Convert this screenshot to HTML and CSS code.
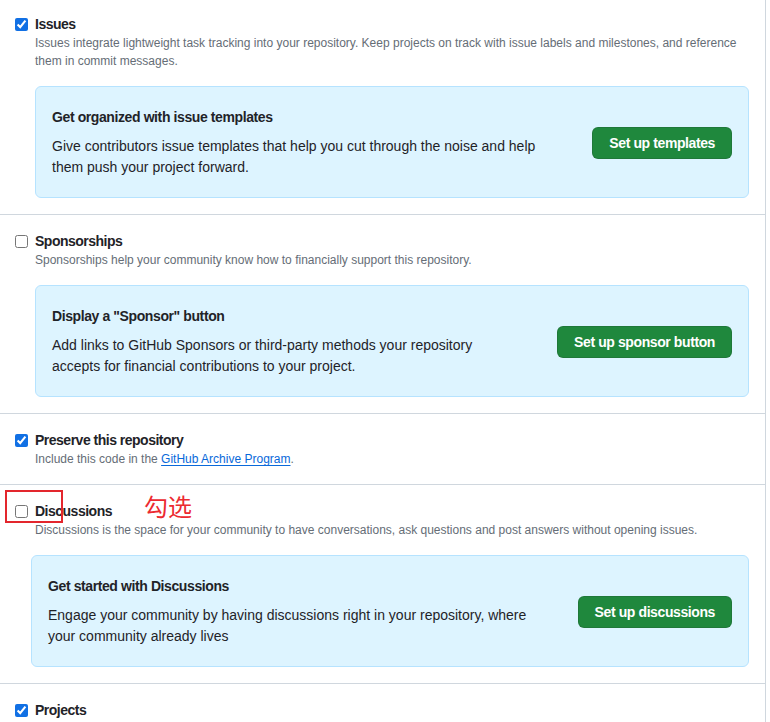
FILE: index.html
```html
<!DOCTYPE html>
<html lang="en">
<head>
<meta charset="utf-8">
<title>Features</title>
<link rel="stylesheet" href="styles.css">
</head>
<body>
<div class="features">
  <section class="feature">
    <input type="checkbox" class="check" checked>
    <div class="feature-body">
      <div class="label">Issues</div>
      <p class="note">Issues integrate lightweight task tracking into your repository. Keep projects on track with issue labels and milestones, and reference them in commit messages.</p>
      <div class="callout">
        <div class="callout-text">
          <h3 class="callout-title">Get organized with issue templates</h3>
          <p class="callout-desc">Give contributors issue templates that help you cut through the noise and help them push your project forward.</p>
        </div>
        <button class="btn-primary">Set up templates</button>
      </div>
    </div>
  </section>

  <section class="feature">
    <input type="checkbox" class="check">
    <div class="feature-body">
      <div class="label">Sponsorships</div>
      <p class="note">Sponsorships help your community know how to financially support this repository.</p>
      <div class="callout">
        <div class="callout-text">
          <h3 class="callout-title">Display a "Sponsor" button</h3>
          <p class="callout-desc">Add links to GitHub Sponsors or third-party methods your repository accepts for financial contributions to your project.</p>
        </div>
        <button class="btn-primary">Set up sponsor button</button>
      </div>
    </div>
  </section>

  <section class="feature">
    <input type="checkbox" class="check" checked>
    <div class="feature-body">
      <div class="label">Preserve this repository</div>
      <p class="note">Include this code in the <a href="#" class="link">GitHub Archive Program</a>.</p>
    </div>
  </section>

  <section class="feature annotated">
    <input type="checkbox" class="check">
    <div class="feature-body">
      <div class="label">Discussions</div>
      <p class="note">Discussions is the space for your community to have conversations, ask questions and post answers without opening issues.</p>
      <div class="callout callout-wide">
        <div class="callout-text">
          <h3 class="callout-title">Get started with Discussions</h3>
          <p class="callout-desc">Engage your community by having discussions right in your repository, where your community already lives</p>
        </div>
        <button class="btn-primary">Set up discussions</button>
      </div>
    </div>
    <span class="mark-box"></span>
    <span class="mark-text">勾选</span>
  </section>

  <section class="feature">
    <input type="checkbox" class="check" checked>
    <div class="feature-body">
      <div class="label">Projects</div>
    </div>
  </section>
</div>
</body>
</html>
```

FILE: styles.css
```css
html, body {
  margin: 0;
  padding: 0;
  background: #ffffff;
}

body {
  font-family: "Liberation Sans", Arial, sans-serif;
  font-size: 14px;
  color: #1f2328;
  overflow: hidden;
}

.features {
  width: 765px;
  margin-top: -2px;
  border-right: 1px solid #d0d7de;
}

.feature {
  position: relative;
  display: flex;
  align-items: flex-start;
  padding: 16px 16px 16px 15px;
  border-bottom: 1px solid #d0d7de;
}

.check {
  width: 13px;
  height: 13px;
  margin: 4px 7px 0 0;
  flex: none;
  accent-color: #1170e4;
}

.feature-body {
  flex: 1;
  min-width: 0;
}

.label {
  font-weight: 700;
  font-size: 14px;
  line-height: 20px;
  letter-spacing: -0.5px;
}

.note {
  margin: 0;
  font-size: 12px;
  line-height: 18px;
  color: #656d76;
}

.link {
  color: #0969da;
  text-decoration: underline;
  text-underline-offset: 2px;
}

.callout {
  display: flex;
  align-items: center;
  margin-top: 16px;
  padding: 20px 16px 19px 16px;
  background: #ddf4ff;
  border: 1px solid #b6e3ff;
  border-radius: 6px;
}

.callout-wide {
  margin-left: -4px;
}

.callout-text {
  flex: 1;
  margin-right: 40px;
}

.callout-title {
  margin: 0 0 8px 0;
  font-size: 14px;
  font-weight: 700;
  line-height: 21px;
  letter-spacing: -0.4px;
}

.callout-desc {
  margin: 0;
  font-size: 14px;
  line-height: 21px;
}

.btn-primary {
  flex: none;
  height: 32px;
  padding: 0 16px;
  font-family: inherit;
  font-size: 14px;
  font-weight: 700;
  letter-spacing: -0.4px;
  color: #ffffff;
  background: #1f883d;
  border: 1px solid rgba(31, 35, 40, 0.15);
  border-radius: 6px;
}

.mark-box {
  position: absolute;
  left: 5px;
  top: 5px;
  width: 54px;
  height: 29px;
  border: 2px solid #e3262d;
}

.mark-text {
  position: absolute;
  left: 144px;
  top: 5px;
  font-family: "Noto Sans CJK SC", sans-serif;
  font-size: 24px;
  line-height: 32px;
  color: #ec2a30;
}
```
